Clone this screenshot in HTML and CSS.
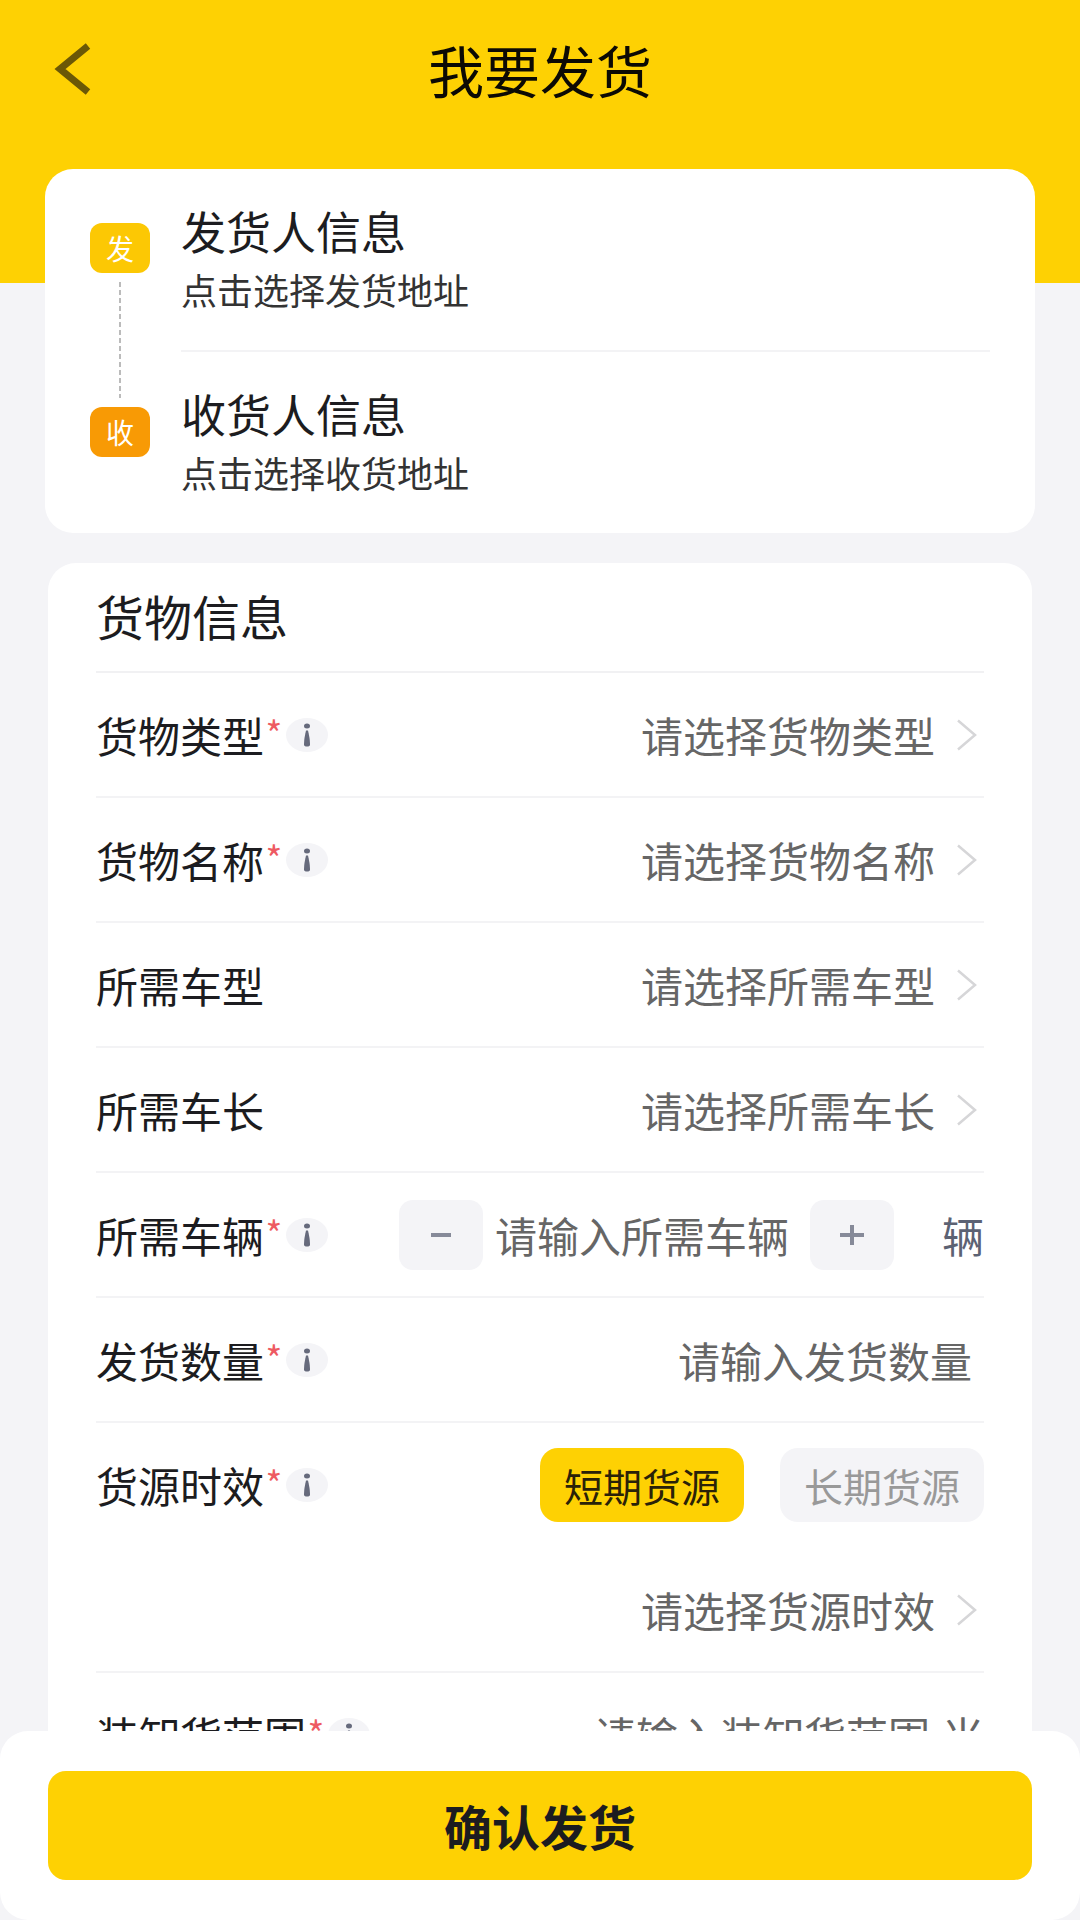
FILE: index.html
```html
<!DOCTYPE html>
<html lang="zh-CN">
<head>
<meta charset="utf-8">
<meta name="viewport" content="width=device-width, initial-scale=1">
<title>我要发货</title>
<link rel="stylesheet" href="styles.css">
</head>
<body>
<svg class="sprite" aria-hidden="true">
  <symbol id="chevron" viewBox="0 0 20 32"><path d="M1 1.500L18 16L1 30.500" fill="none" stroke="currentColor" stroke-width="2.500"/></symbol>
  <symbol id="info" viewBox="0 0 42 34"><ellipse cx="21" cy="17" rx="21" ry="17" fill="#f4f4f7"/><ellipse cx="21" cy="8" rx="3" ry="2.500" fill="#666a7c"/><path d="M20 12.500h2c1 4 2 9 2 14q0 2-3 2t-3-2c0-5 1-10 2-14z" fill="#666a7c"/></symbol>
</svg>

<form class="app">
  <div class="scroll">
    <header class="header">
      <button type="button" class="back" aria-label="返回">
        <svg width="38" height="52" viewBox="0 0 38 52"><path d="M34 3L6 26L34 49" fill="none" stroke="#6b5806" stroke-width="7"/></svg>
      </button>
      <h1 class="title">我要发货</h1>
    </header>

    <main class="content">
      <section class="card route">
        <div class="route-marks">
          <span class="badge badge-from">发</span>
          <span class="route-line"></span>
          <span class="badge badge-to">收</span>
        </div>
        <div class="route-list">
          <button type="button" class="address">
            <span class="address-name">发货人信息</span>
            <span class="address-hint">点击选择发货地址</span>
          </button>
          <button type="button" class="address">
            <span class="address-name">收货人信息</span>
            <span class="address-hint">点击选择收货地址</span>
          </button>
        </div>
      </section>

      <section class="card goods">
        <h2 class="goods-title">货物信息</h2>

        <div class="row">
          <label class="label" for="type">货物类型<span class="star">*</span></label>
          <button type="button" class="info" aria-label="说明"><svg width="42" height="34"><use href="#info"/></svg></button>
          <select class="field" id="type"><option>请选择货物类型</option></select>
          <svg class="arrow" width="20" height="32"><use href="#chevron"/></svg>
        </div>

        <div class="row">
          <label class="label" for="name">货物名称<span class="star">*</span></label>
          <button type="button" class="info" aria-label="说明"><svg width="42" height="34"><use href="#info"/></svg></button>
          <select class="field" id="name"><option>请选择货物名称</option></select>
          <svg class="arrow" width="20" height="32"><use href="#chevron"/></svg>
        </div>

        <div class="row">
          <label class="label" for="model">所需车型</label>
          <select class="field" id="model"><option>请选择所需车型</option></select>
          <svg class="arrow" width="20" height="32"><use href="#chevron"/></svg>
        </div>

        <div class="row">
          <label class="label" for="length">所需车长</label>
          <select class="field" id="length"><option>请选择所需车长</option></select>
          <svg class="arrow" width="20" height="32"><use href="#chevron"/></svg>
        </div>

        <div class="row">
          <label class="label" for="trucks">所需车辆<span class="star">*</span></label>
          <button type="button" class="info" aria-label="说明"><svg width="42" height="34"><use href="#info"/></svg></button>
          <div class="stepper">
            <button type="button" class="step" aria-label="减少"><svg width="24" height="20" viewBox="0 0 24 20"><path d="M2 10H22" stroke="#868a99" stroke-width="4"/></svg></button>
            <input class="field step-field" id="trucks" placeholder="请输入所需车辆">
            <button type="button" class="step" aria-label="增加"><svg width="24" height="20" viewBox="0 0 24 20"><path d="M0 10H24M12 0V20" fill="none" stroke="#868a99" stroke-width="4"/></svg></button>
          </div>
          <span class="unit unit-truck">辆</span>
        </div>

        <div class="row">
          <label class="label" for="amount">发货数量<span class="star">*</span></label>
          <button type="button" class="info" aria-label="说明"><svg width="42" height="34"><use href="#info"/></svg></button>
          <input class="field amount" id="amount" placeholder="请输入发货数量">
        </div>

        <div class="row row-open">
          <label class="label" for="period">货源时效<span class="star">*</span></label>
          <button type="button" class="info" aria-label="说明"><svg width="42" height="34"><use href="#info"/></svg></button>
          <div class="tags">
            <label class="tag"><input type="radio" name="term" checked>短期货源</label>
            <label class="tag"><input type="radio" name="term">长期货源</label>
          </div>
        </div>
        <div class="row">
          <select class="field" id="period"><option>请选择货源时效</option></select>
          <svg class="arrow" width="20" height="32"><use href="#chevron"/></svg>
        </div>

        <div class="row">
          <label class="label" for="range">装卸货范围<span class="star">*</span></label>
          <button type="button" class="info" aria-label="说明"><svg width="42" height="34"><use href="#info"/></svg></button>
          <input class="field" id="range" placeholder="请输入装卸货范围">
          <span class="unit">米</span>
        </div>
      </section>
    </main>
  </div>

  <footer class="footer">
    <button type="submit" class="submit">确认发货</button>
  </footer>
</form>
</body>
</html>
```

FILE: styles.css
```css
* {
  box-sizing: border-box;
}

body {
  margin: 0;
  background: #f4f4f7;
  color: #1c1c20;
  font-family: "Noto Sans CJK SC", sans-serif;
  font-size: 42px;
  line-height: 1;
}

button,
input,
select {
  margin: 0;
  padding: 0;
  border: 0;
  background: none;
  color: inherit;
  font: inherit;
}

h1,
h2 {
  margin: 0;
  font-weight: 400;
}

svg {
  display: block;
}

.sprite {
  position: absolute;
  width: 0;
  height: 0;
}

.app {
  display: flex;
  flex-direction: column;
  height: 100vh;
}

.scroll {
  flex: 1;
  min-height: 0;
  overflow-y: auto;
  scrollbar-width: none;
}

/* Header */
.header {
  display: grid;
  grid-template-columns: 1fr auto 1fr;
  align-items: center;
  padding: 39px 54px 184px;
  background: #fed103;
}

.back {
  justify-self: start;
}

.title {
  color: #0c0a04;
  font-size: 56px;
  line-height: 60px;
}

/* Cards */
.content {
  margin-top: -114px;
  padding: 0 45px;
}

.card {
  border-radius: 28px;
  background: #fff;
}

.route {
  display: flex;
  gap: 31px;
  padding: 0 45px;
}

.route-marks {
  display: flex;
  flex-direction: column;
  align-items: center;
  gap: 9px;
  padding: 54px 0 76px;
}

.badge {
  width: 60px;
  border-radius: 12px;
  color: #fff;
  font-size: 28px;
  line-height: 50px;
  text-align: center;
}

.badge-from {
  background: #fcc804;
}

.badge-to {
  background: #f89a05;
}

.route-line {
  flex: 1;
  width: 2px;
  background: repeating-linear-gradient(#bbb 0 5px, transparent 5px 8px);
}

.route-list {
  flex: 1;
}

.address {
  display: flex;
  flex-direction: column;
  gap: 12px;
  width: 100%;
  padding: 37px 0 40px;
  text-align: left;
}

.address + .address {
  border-top: 2px solid #f3f3f5;
}

.address-name {
  font-size: 45px;
  line-height: 50px;
}

.address-hint {
  color: #333;
  font-size: 36px;
  line-height: 42px;
}

/* Goods form */
.goods {
  margin: 30px 3px 0;
  padding: 0 48px 48px;
}

.goods-title {
  padding-bottom: 4px;
  border-bottom: 2px solid #f1f1f3;
  font-size: 48px;
  line-height: 104px;
}

.row {
  display: flex;
  align-items: center;
  height: 125px;
  border-bottom: 2px solid #f3f3f5;
}

.row-open {
  border-bottom-color: transparent;
}

.label {
  display: flex;
  white-space: nowrap;
}

.star {
  width: 20px;
  margin-right: 2px;
  color: #ee5a62;
  font-size: 36px;
  text-align: center;
}

.field {
  flex: 1;
  min-width: 0;
  height: 60px;
  appearance: none;
  outline: 0;
  color: #666;
  text-align: right;
  text-align-last: right;
}

.field::placeholder {
  color: #666;
  opacity: 1;
}

.arrow {
  margin: 0 7px 0 22px;
  color: #d6d6d8;
}

.stepper {
  display: flex;
  gap: 12px;
  margin-left: auto;
}

.step {
  display: grid;
  place-items: center;
  width: 84px;
  height: 70px;
  border-radius: 14px;
  background: #f4f4f7;
}

.step-field {
  flex: none;
  width: 303px;
  height: 70px;
  text-align: left;
  text-align-last: left;
}

.unit {
  margin-left: 12px;
  color: #666;
}

.unit-truck {
  margin-left: 48px;
  color: #5c6273;
}

.amount {
  padding-right: 12px;
}

.tags {
  display: flex;
  gap: 36px;
  margin-left: auto;
}

.tag {
  width: 204px;
  border-radius: 18px;
  background: #f4f4f7;
  color: #999;
  font-size: 39px;
  line-height: 74px;
  text-align: center;
}

.tag:has(:checked) {
  background: #fed103;
  color: #2a2208;
}

.tag input {
  position: absolute;
  appearance: none;
}

/* Bottom bar */
.footer {
  padding: 40px 48px;
  border-radius: 28px;
  background: #fff;
}

.submit {
  display: block;
  width: 100%;
  border-radius: 18px;
  background: #fed103;
  font-size: 48px;
  font-weight: 700;
  line-height: 109px;
}
```
